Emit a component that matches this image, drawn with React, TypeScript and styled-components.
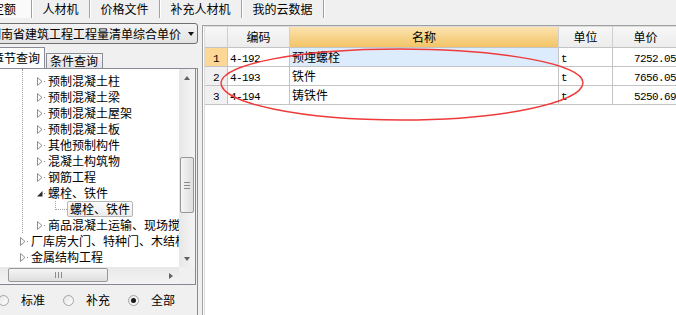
import React from 'react';
import styled, { createGlobalStyle } from 'styled-components';

const GlobalStyle = createGlobalStyle`
  html, body {
    margin: 0;
    padding: 0;
    background: #f0f0f0;
  }
  body {
    font-family: "Noto Sans CJK SC", "Noto Sans", sans-serif;
    font-size: 12px;
    color: #000;
  }
  * {
    box-sizing: border-box;
  }
`;

const Screen = styled.div`
  position: relative;
  width: 676px;
  height: 315px;
  overflow: hidden;
  background: #f0f0f0;
  display: flex;
  flex-direction: column;
`;

const TabBar = styled.div`
  display: flex;
  height: 18px;
  flex-shrink: 0;
`;

const TopTab = styled.div<{ $active?: boolean }>`
  padding: 0 10.5px;
  line-height: 18px;
  white-space: nowrap;
  border-right: 1px solid #a0a0a0;
  box-shadow: 1px 0 0 #fff;
  background: ${(p) => (p.$active ? '#fafafa' : 'transparent')};
`;

const FirstTab = styled(TopTab)`
  margin-left: -20px;
  padding: 0 15px 0 12px;
`;

const Main = styled.div`
  display: flex;
  flex: 1;
  min-height: 0;
`;

const LeftPanel = styled.div`
  width: 198px;
  flex-shrink: 0;
  display: flex;
  flex-direction: column;
  overflow: hidden;
  padding-top: 5px;
`;

const Combo = styled.div`
  height: 21px;
  margin-left: -14px;
  flex-shrink: 0;
  border: 1px solid #707070;
  border-radius: 3px;
  background: linear-gradient(#f3f3f3, #e3e3e3);
  display: flex;
  align-items: center;
  padding: 0 3px 0 2px;
`;

const ComboText = styled.span`
  line-height: 19px;
  white-space: nowrap;
`;

const ComboArrow = styled.span`
  margin-left: auto;
  width: 0;
  height: 0;
  border-left: 3.5px solid transparent;
  border-right: 3.5px solid transparent;
  border-top: 4px solid #111;
`;

const QueryTabs = styled.div`
  display: flex;
  align-items: flex-end;
  height: 21px;
  margin: 3px 0 0 -12px;
  flex-shrink: 0;
`;

const QueryTab = styled.div<{ $active?: boolean }>`
  height: ${(p) => (p.$active ? 21 : 15)}px;
  line-height: ${(p) => (p.$active ? 20 : 14)}px;
  margin-left: ${(p) => (p.$active ? 0 : 1)}px;
  padding: 0 4px 0 3px;
  border: 1px solid #898c95;
  border-bottom: none;
  white-space: nowrap;
  background: ${(p) => (p.$active ? '#fcfcfc' : 'linear-gradient(#f4f4f4, #e4e4e4)')};
`;

const TabPage = styled.div`
  flex: 1;
  min-height: 0;
  display: flex;
  flex-direction: column;
  border-top: 1px solid #898c95;
  border-right: 1px solid #898c95;
`;

const TreeBox = styled.div`
  display: flex;
  flex-direction: column;
  flex-shrink: 0;
  margin-right: 1px;
  border-right: 1px solid #828790;
  border-bottom: 1px solid #828790;
  background: #fff;
`;

const TreeBody = styled.div`
  display: flex;
  height: 198px;
`;

const TreeContent = styled.div`
  flex: 1;
  min-width: 0;
  overflow: hidden;
  white-space: nowrap;
`;

const Group = styled.div`
  margin-left: 22px;
  padding-top: 4px;
  border-left: 1px dotted #a0a0a0;
`;

const Row = styled.div<{ $indent: number }>`
  display: flex;
  align-items: center;
  height: 16px;
  padding-left: ${(p) => p.$indent}px;
  & > * {
    flex-shrink: 0;
  }
`;

const Label = styled.span`
  line-height: 16px;
`;

const ExpanderIcon = styled.svg`
  display: block;
  flex-shrink: 0;
`;

const Stub = styled.span`
  width: 1px;
  height: 1px;
  margin: 0 3px 0 1px;
  background: #8a8a8a;
`;

const Connector = styled.span`
  align-self: flex-start;
  width: 12px;
  height: 9px;
  margin-left: 32px;
  border-left: 1px dotted #a0a0a0;
  border-bottom: 1px dotted #a0a0a0;
`;

const SelectedItem = styled.span`
  height: 16px;
  line-height: 14px;
  padding: 0 2px;
  border: 1px solid #b5b5b5;
  border-radius: 2px;
  background: linear-gradient(#fbfbfb, #ececec);
`;

const VScroll = styled.div`
  width: 16px;
  flex-shrink: 0;
  display: flex;
  flex-direction: column;
  background: linear-gradient(to right, #e8e8e8, #f4f4f4);
`;

const ScrollButton = styled.div`
  width: 17px;
  height: 17px;
  flex-shrink: 0;
  display: flex;
  align-items: center;
  justify-content: center;
`;

const VButton = styled(ScrollButton)`
  width: 16px;
`;

const Arrow = styled.span<{ $dir: 'up' | 'down' | 'right' }>`
  width: 0;
  height: 0;
  ${(p) =>
    p.$dir === 'right'
      ? 'border-top: 3.5px solid transparent; border-bottom: 3.5px solid transparent; border-left: 4px solid #606060;'
      : `border-left: 3.5px solid transparent; border-right: 3.5px solid transparent; border-${
          p.$dir === 'up' ? 'bottom' : 'top'
        }: 4px solid #606060;`}
`;

const VThumb = styled.div`
  margin: 71px 1px 0;
  height: 56px;
  border: 1px solid #979797;
  border-radius: 2px;
  background: linear-gradient(to right, #f5f5f5, #dedede);
  display: flex;
  flex-direction: column;
  align-items: center;
  justify-content: center;
  gap: 2px;
`;

const Spacer = styled.div`
  flex: 1;
`;

const Grip = styled.span<{ $vertical?: boolean }>`
  width: ${(p) => (p.$vertical ? 1 : 6)}px;
  height: ${(p) => (p.$vertical ? 6 : 1)}px;
  background: #8c8c8c;
`;

const HScrollRow = styled.div`
  display: flex;
  height: 17px;
`;

const HTrack = styled.div`
  flex: 1;
  display: flex;
  align-items: flex-start;
  background: linear-gradient(#e8e8e8, #f4f4f4);
`;

const HThumb = styled.div`
  margin: 1px 0 0 8px;
  width: 100px;
  height: 14px;
  border: 1px solid #979797;
  border-radius: 2px;
  background: linear-gradient(#f5f5f5, #dedede);
  display: flex;
  align-items: center;
  justify-content: center;
  gap: 2px;
`;

const RightButton = styled(ScrollButton)`
  margin-left: auto;
`;

const Corner = styled.div`
  width: 16px;
  background: #f0f0f0;
`;

const RadioRow = styled.div`
  display: flex;
  align-items: center;
  height: 36px;
  margin-left: -2px;
`;

const RadioOption = styled.label`
  display: flex;
  align-items: center;
  margin-right: 18px;
`;

const RadioDot = styled.span<{ $checked?: boolean }>`
  width: 11px;
  height: 11px;
  border-radius: 50%;
  border: 1px solid #a4a4a4;
  background: linear-gradient(135deg, #e4e4e4, #ffffff);
  display: flex;
  align-items: center;
  justify-content: center;
  &::after {
    content: '';
    width: 5px;
    height: 5px;
    border-radius: 50%;
    background: ${(p) => (p.$checked ? '#1a1a1a' : 'transparent')};
  }
`;

const RadioText = styled.span`
  margin-left: 12px;
  line-height: 16px;
`;

const Splitter = styled.div`
  width: 4px;
  flex-shrink: 0;
`;

const RightPanel = styled.div`
  flex: 1;
  min-width: 0;
  margin-top: 7px;
  padding-left: 1px;
  border-top: 1px solid #a0a0a0;
  border-left: 1px solid #a0a0a0;
  background: #fff;
  overflow: hidden;
`;

const GridFrame = styled.div`
  height: 100%;
  border-top: 1px solid #dcdcdc;
  border-left: 1px solid #dcdcdc;
`;

const Grid = styled.div`
  display: grid;
  grid-template-columns: 23px 62px 269px 54px 66px;
  grid-template-rows: 21px;
  grid-auto-rows: 19px;
`;

const HeadCell = styled.div<{ $accent?: boolean }>`
  text-align: center;
  line-height: 20px;
  white-space: nowrap;
  overflow: hidden;
  border-right: 1px solid #d0d0d0;
  border-bottom: 1px solid #c4c4c4;
  background: ${(p) =>
    p.$accent ? 'linear-gradient(#fbe3b0, #f2c466)' : 'linear-gradient(#f7f7f7, #ececec)'};
`;

const NumCell = styled.div<{ $current?: boolean }>`
  text-align: center;
  line-height: 18px;
  border-right: 1px solid #c4c4c4;
  border-bottom: 1px solid #c4c4c4;
  background: ${(p) => (p.$current ? '#fcd796' : '#f0f0f0')};
`;

const Cell = styled.div<{ $selected?: boolean; $right?: boolean }>`
  padding: ${(p) => (p.$right ? '0 2px 0 0' : '0 0 0 2px')};
  text-align: ${(p) => (p.$right ? 'right' : 'left')};
  line-height: 18px;
  white-space: nowrap;
  overflow: hidden;
  border-right: 1px solid #c4c4c4;
  border-bottom: 1px solid #c4c4c4;
  background: ${(p) => (p.$selected ? '#dcecfc' : '#fff')};
`;

const Mono = styled.span`
  font-family: "Liberation Mono", monospace;
  font-size: 11px;
  letter-spacing: -0.6px;
`;

const Overlay = styled.svg`
  position: absolute;
  left: 0;
  top: 0;
  pointer-events: none;
`;

const Expander = ({ open }: { open?: boolean }) =>
  open ? (
    <ExpanderIcon width="6" height="9" viewBox="0 0 6 9">
      <path d="M5.5 2 L5.5 7.5 L0 7.5 Z" fill="#2a2a2a" />
    </ExpanderIcon>
  ) : (
    <ExpanderIcon width="6" height="9" viewBox="0 0 6 9">
      <path d="M0.5 0.5 L5 4.5 L0.5 8.5 Z" fill="#fff" stroke="#8e8e8e" />
    </ExpanderIcon>
  );

const tabs = ['人材机', '价格文件', '补充人材机', '我的云数据'];

const precast = [
  '预制混凝土柱',
  '预制混凝土梁',
  '预制混凝土屋架',
  '预制混凝土板',
  '其他预制构件',
  '混凝土构筑物',
  '钢筋工程',
];

const chapters = ['厂库房大门、特种门、木结构工程', '金属结构工程'];

const rows = [
  { code: '4-192', name: '预埋螺栓', unit: 't', price: '7252.05' },
  { code: '4-193', name: '铁件', unit: 't', price: '7656.05' },
  { code: '4-194', name: '铸铁件', unit: 't', price: '5250.69' },
];

const App = (): React.ReactElement => (
  <Screen>
    <GlobalStyle />
    <TabBar>
      <FirstTab $active>定额</FirstTab>
      {tabs.map((t) => (
        <TopTab key={t}>{t}</TopTab>
      ))}
    </TabBar>
    <Main>
      <LeftPanel>
        <Combo>
          <ComboText>湖南省建筑工程工程量清单综合单价</ComboText>
          <ComboArrow />
        </Combo>
        <QueryTabs>
          <QueryTab $active>章节查询</QueryTab>
          <QueryTab>条件查询</QueryTab>
        </QueryTabs>
        <TabPage>
          <TreeBox>
            <TreeBody>
              <TreeContent>
                <Group>
                  {precast.map((item) => (
                    <Row key={item} $indent={14}>
                      <Expander />
                      <Stub />
                      <Label>{item}</Label>
                    </Row>
                  ))}
                  <Row $indent={14}>
                    <Expander open />
                    <Stub />
                    <Label>螺栓、铁件</Label>
                  </Row>
                  <Row $indent={0}>
                    <Connector />
                    <SelectedItem>螺栓、铁件</SelectedItem>
                  </Row>
                  <Row $indent={14}>
                    <Expander />
                    <Stub />
                    <Label>商品混凝土运输、现场搅拌混凝土</Label>
                  </Row>
                </Group>
                {chapters.map((item) => (
                  <Row key={item} $indent={20}>
                    <Expander />
                    <Stub />
                    <Label>{item}</Label>
                  </Row>
                ))}
              </TreeContent>
              <VScroll>
                <VButton>
                  <Arrow $dir="up" />
                </VButton>
                <VThumb>
                  <Grip />
                  <Grip />
                  <Grip />
                </VThumb>
                <Spacer />
                <VButton>
                  <Arrow $dir="down" />
                </VButton>
              </VScroll>
            </TreeBody>
            <HScrollRow>
              <HTrack>
                <HThumb>
                  <Grip $vertical />
                  <Grip $vertical />
                  <Grip $vertical />
                </HThumb>
                <RightButton>
                  <Arrow $dir="right" />
                </RightButton>
              </HTrack>
              <Corner />
            </HScrollRow>
          </TreeBox>
          <RadioRow>
            <RadioOption>
              <RadioDot />
              <RadioText>标准</RadioText>
            </RadioOption>
            <RadioOption>
              <RadioDot />
              <RadioText>补充</RadioText>
            </RadioOption>
            <RadioOption>
              <RadioDot $checked />
              <RadioText>全部</RadioText>
            </RadioOption>
          </RadioRow>
        </TabPage>
      </LeftPanel>
      <Splitter />
      <RightPanel>
        <GridFrame>
          <Grid>
            <HeadCell />
            <HeadCell>编码</HeadCell>
            <HeadCell $accent>名称</HeadCell>
            <HeadCell>单位</HeadCell>
            <HeadCell>单价</HeadCell>
            {rows.map((r, i) => (
              <React.Fragment key={r.code}>
                <NumCell $current={i === 0}>
                  <Mono>{i + 1}</Mono>
                </NumCell>
                <Cell>
                  <Mono>{r.code}</Mono>
                </Cell>
                <Cell $selected={i === 0}>{r.name}</Cell>
                <Cell>
                  <Mono>{r.unit}</Mono>
                </Cell>
                <Cell $right>
                  <Mono>{r.price}</Mono>
                </Cell>
              </React.Fragment>
            ))}
          </Grid>
        </GridFrame>
      </RightPanel>
    </Main>
    <Overlay width="676" height="315" viewBox="0 0 676 315">
      <path
        d="M221 83 C222 64 300 49 400 49 C500 49 584 64 583 83 C582 103 500 120 402 120 C300 120 221 103 221 83 Z"
        fill="none"
        stroke="#ee3a3a"
        strokeWidth="1.4"
      />
    </Overlay>
  </Screen>
);

export default App;
